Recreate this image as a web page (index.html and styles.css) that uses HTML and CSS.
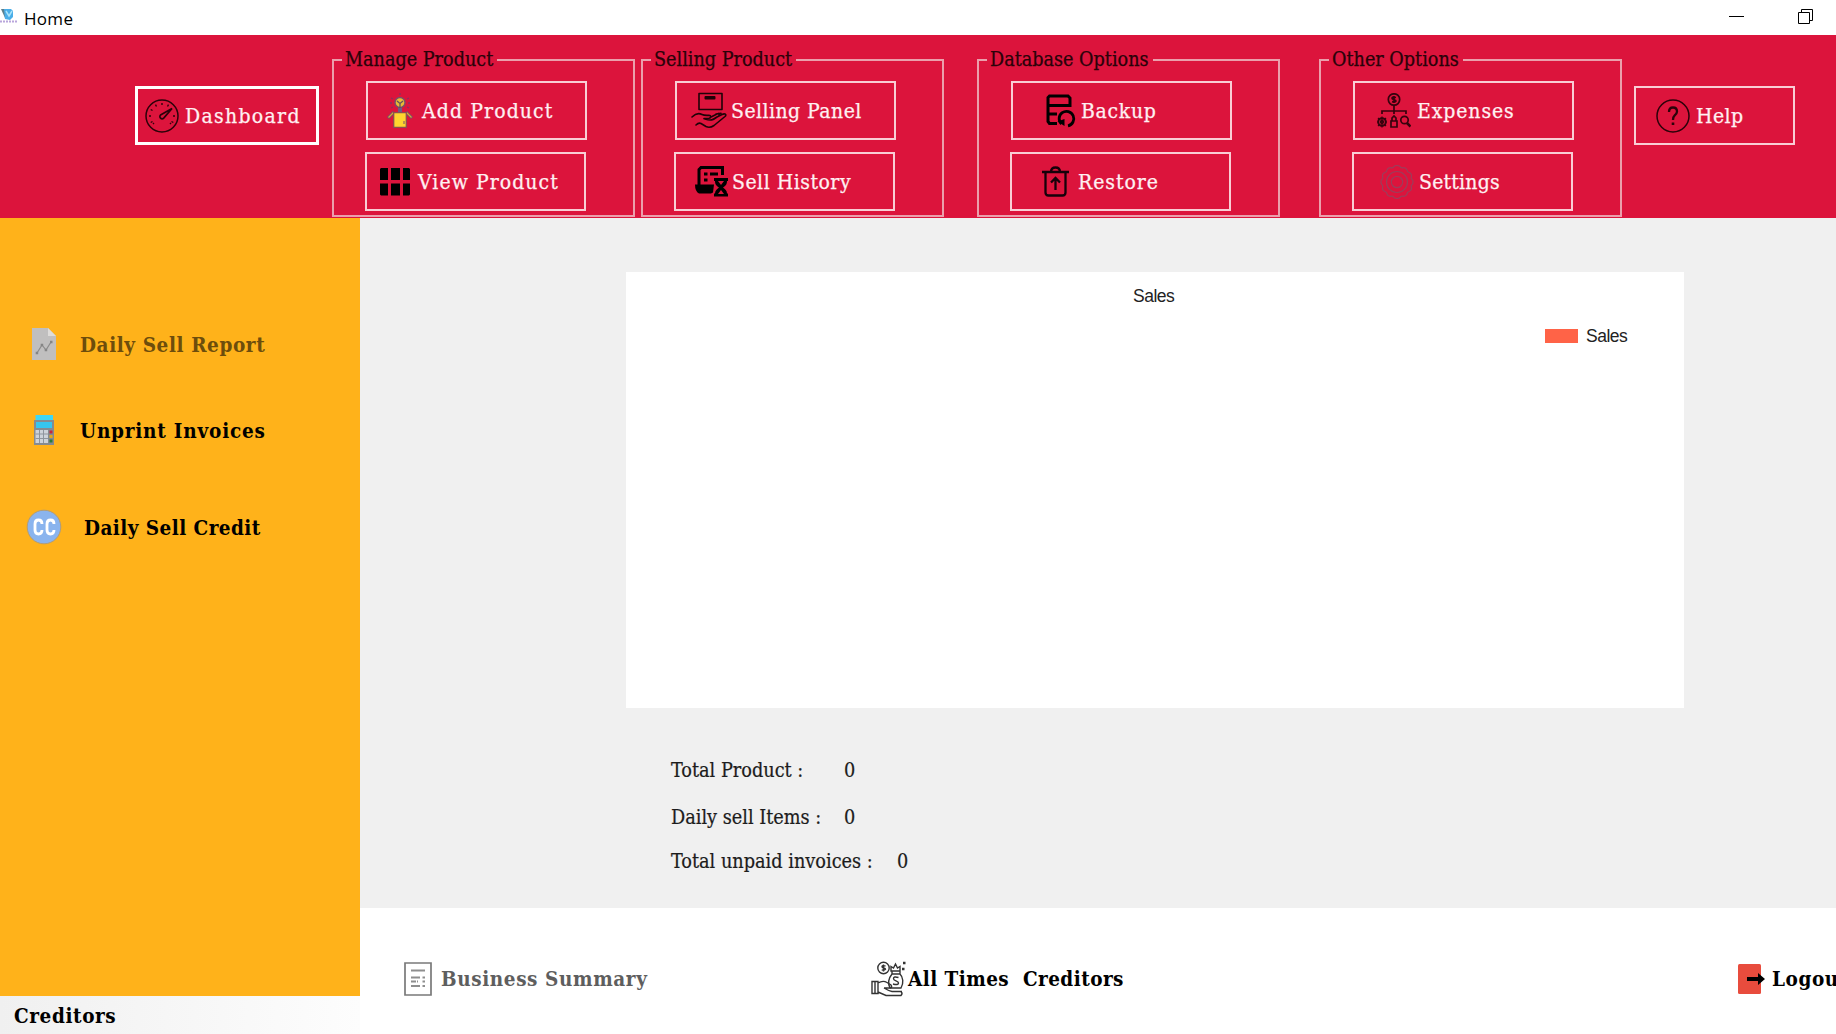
FILE: index.html
```html
<!DOCTYPE html>
<html lang="en">
<head>
<meta charset="utf-8">
<title>Home</title>
<link rel="stylesheet" href="styles.css">
</head>
<body>
<header class="titlebar">
  <svg class="app-icon" width="18" height="16" viewBox="0 0 18 16"><path d="M1 1l4 9 3-1-2-8z" fill="#5b7f8c"/><path d="M4 1h7l2 2v6l-3 3-5-1z" fill="#4aaee8"/><path d="M6 3l3 5 3-5" fill="none" stroke="#a9e4fa" stroke-width="1.5"/><path d="M0 13.500h17" stroke="#b9a6dc" stroke-width="2" stroke-dasharray="2 1"/></svg>
  <span class="window-title">Home</span>
  <svg class="win-min" width="15" height="16" viewBox="0 0 15 16"><path d="M0 7.500h15" stroke="#000"/></svg>
  <svg class="win-restore" width="15" height="16" viewBox="0 0 15 16" fill="none" stroke="#000"><path d="M.5 3.500h11v11H.5z"/><path d="M3.500 3.500v-3h11v11h-3"/></svg>
</header>

<nav class="ribbon">
  <button class="btn btn-dashboard"><svg width="34" height="34" viewBox="0 0 34 34" fill="none" stroke="#2b0209"><circle cx="17" cy="17" r="16" stroke-width="1.500"/><path d="M15.500 16l11.500-6.500-8.300 9.600a2 2 0 1 1-3.200-3.100z" stroke-width="1.700"/><path d="M4 17h2M28 17h2M17 4v2M10.500 5.700l1 1.800M23.500 5.700l-1 1.800M5.700 10.500l1.800 1M5.700 23.500l1.800-1M28.300 23.500l-1.800-1M8 25l1-1M26 25l-1-1" stroke-width="1.400"/></svg><span>Dashboard</span></button>

  <fieldset class="group group-product">
    <legend>Manage Product</legend>
    <button class="btn btn-add"><svg width="28" height="36" viewBox="0 0 28 36"><path d="M14 0v2M5 5l2 1M23 5l-2 1M4 10h2M22 10h2M5 15l2-1M23 15l-2-1" stroke="#8d2f5d" stroke-width="1.300"/><circle cx="14" cy="9.500" r="5" fill="#e9bb35" stroke="#75506a" stroke-width="1.400"/><path d="M11 8l3 2.500L17 8M14 10v5" fill="none" stroke="#635060" stroke-width="1.300"/><path d="M12 15h4v4h-4z" fill="#6c5b83"/><path d="M2 25l6-6M26 25l-6-6" stroke="#75506a" stroke-width="3"/><path d="M2.500 24.500l5-5M25.500 24.500l-5-5" stroke="#dba630" stroke-width="1.200"/><path d="M7.700 19.700h12.600v14.600H7.700z" fill="#ffd52f" stroke="#8c4f4f" stroke-width="1.300"/><path d="M18 28v3" stroke="#75506a"/></svg><span>Add Product</span></button>
    <button class="btn btn-view"><svg width="30" height="28" viewBox="0 0 30 28"><path d="M1 0h7v12H0V1zM11 0h9v12h-9zM23 0h6l1 1v11h-7zM0 15.500h8v12H1l-1-1zM11 15.500h9v12h-9zM23 15.500h7v11l-1 1h-6z"/></svg><span>View Product</span></button>
  </fieldset>

  <fieldset class="group group-selling">
    <legend>Selling Product</legend>
    <button class="btn btn-panel"><svg width="36" height="37" viewBox="0 0 36 37" fill="none" stroke="#1e0207" stroke-width="1.600" stroke-linejoin="round" stroke-linecap="round"><path d="M8 1.500h23v16H8z"/><path d="M14.500 5h9v1.500h-9z" stroke-width="2"/><path d="M1 25c4-4 7-4 10-2.500 2 1 4 1 7 .8 2 0 2.500 2.700 0 3l-5 .3M14 27c6 2 8 1 12-2l5-2.500c3-1.500 5 0 3 2L23 33.500c-3 2-5 2.500-8 1l-5-3c-2-1-3-.5-5 1.500M20 25l6-3c2-1 3 0 2 1M25 22l5-.7"/></svg><span>Selling Panel</span></button>
    <button class="btn btn-history"><svg width="34" height="31" viewBox="0 0 34 31"><path d="M4 19V3.500L6 1.500h21.500V9" fill="none" stroke="#000" stroke-width="3"/><path d="M9 6.500h3.500v3H9zM15 6.500h8v3h-8zM9 12.500h3.500v3H9zM0 18.500h19l-1 8-2 1H4q-4-2-4-9z"/><path d="M20 12h13v3h-1c0 4-2 5-4 6.500 2 1.500 4 3 4 6h1v3H19v-3h1c0-3 2-4.500 4-6-2-1.500-4-2.500-4-6.500h-1v-3zM23 15l3 4 3-4zM23 28h6l-3-4z" fill-rule="evenodd"/></svg><span>Sell History</span></button>
  </fieldset>

  <fieldset class="group group-database">
    <legend>Database Options</legend>
    <button class="btn btn-backup"><svg width="31" height="34" viewBox="0 0 31 34" fill="none" stroke="#000" stroke-width="3"><path d="M11 29.500H3.500l-1.500-2V3.500L3.500 2H22l2 2v7.500H2M2 20h9"/><path d="M15.500 30A7.300 7.300 0 1 1 22 31.800" stroke-width="2.800"/><path d="M11.500 27.500l7 4.500v-7z" fill="#000" stroke="none"/></svg><span>Backup</span></button>
    <button class="btn btn-restore"><svg width="27" height="31" viewBox="0 0 27 31" fill="none" stroke="#16010a" stroke-width="2.300"><path d="M0 6h27M3.500 6v20.500q0 3 3 3h14q3 0 3-3V6M9 6q0-4.500 4.500-4.500T18 6M13.500 24V12M9 16.500l4.500-4.500 4.500 4.500"/></svg><span>Restore</span></button>
  </fieldset>

  <fieldset class="group group-other">
    <legend>Other Options</legend>
    <button class="btn btn-expenses"><svg width="34" height="35" viewBox="0 0 34 35" fill="none" stroke="#35030d" stroke-width="1.700"><circle cx="17" cy="6.500" r="5.700"/><path d="M19 4.500q-4-1-4 .8c0 1.700 4 .8 4 2.700q-.5 1.500-4 .7M17 3v7M17 12v9M5 21v-3h24v3"/><circle cx="5" cy="29" r="3.800" stroke-width="2"/><circle cx="5" cy="29" r="1.300"/><path d="M5 23.500v11M0 29h2M8 29h2M1 25l1.500 1.500M9 25l-1.500 1.500M1 33l1.500-1.500M9 33l-1.500-1.500" stroke-width="1.200"/><path d="M14 28h6v6h-6zM15 28v-3l2-2 2 2v3"/><circle cx="27.500" cy="27" r="3.700"/><path d="M30 30l3.500 3.500" stroke-width="2.500"/></svg><span>Expenses</span></button>
    <button class="btn btn-settings"><svg width="34" height="34" viewBox="0 0 34 34" fill="none" stroke="#9d3d5a" stroke-width="1.200"><circle cx="17" cy="17" r="10.500"/><circle cx="17" cy="17" r="5.700"/><path d="M14 1.500q3-2 6 0 1 2 3 1.300 3-.5 4 2.200 0 2 2 2.500 3 1 2.500 4-1 2 .8 3 1.500 2.500 0 5-1.800 1-.8 3 .5 3-2.500 4-2 .5-2 2.500-1 2.700-4 2.200-2-.7-3 1.300-3 2-6 0-1-2-3-1.300-3 .5-4-2.200 0-2-2-2.500-3-1-2.500-4 1-2-.8-3-1.500-2.500 0-5 1.800-1 .8-3-.5-3 2.500-4 2-.5 2-2.500 1-2.700 4-2.200 2 .7 3-1.300z"/></svg><span>Settings</span></button>
  </fieldset>

  <button class="btn btn-help"><svg width="34" height="34" viewBox="0 0 34 34" fill="none" stroke="#2b0209"><circle cx="17" cy="17" r="16" stroke-width="1.500"/><path d="M13 13q0-4.500 4-4.500t4 4q0 2-2.300 3.800-1.700 1.500-1.700 4.700" stroke-width="2.300"/><path d="M15.700 23.500h2.600v2.500h-2.600z" fill="#2b0209" stroke="none"/></svg><span>Help</span></button>
</nav>

<div class="workspace">
  <aside class="sidebar">
    <ul class="menu">
      <li class="menu-report"><svg width="36" height="36" viewBox="0 0 36 36"><path d="M6 2h16l8 8v24H6z" fill="#c0bfbf"/><path d="M22 2l8 8h-8z" fill="#dedcda"/><path d="M11 27l5-8 4 5 5-8" fill="none" stroke="#8b8b8b" stroke-width="1.200"/><path d="M9.700 25.700h2.500v2.500H9.700zM14.700 17.700h2.500v2.500h-2.500zM18.700 22.700h2.500v2.500h-2.500zM24 14.700h2.500v2.500H24z" fill="#858585"/></svg><span>Daily Sell Report</span></li>
      <li class="menu-unprint"><svg width="36" height="36" viewBox="0 0 36 36"><path d="M9.500 3H27v6H9.500z" fill="#3fd6f4"/><path d="M8 8h20v25H8z" fill="#858b91"/><path d="M10 10h16v6H10z" fill="#36c6ef"/><path d="M9.500 18H22v13H9.500z" fill="#cdd3da"/><path d="M13.500 18v13M17.500 18v13M9.500 22H22M9.500 26.500H22" stroke="#8e959d"/><path d="M23.500 18.500h3v3h-3z" fill="#c6263e"/><path d="M23.500 23h3v3h-3z" fill="#e3a91c"/><path d="M23.500 27.500h3v3h-3z" fill="#2a7a3c"/></svg><span>Unprint Invoices</span></li>
      <li class="menu-credit"><svg width="36" height="36" viewBox="0 0 36 36"><circle cx="18" cy="18" r="16.800" fill="#8ab4ee" stroke="#b19c78"/><path d="M16 15q0-4-3.500-4T9 15v6q0 4 3.500 4t3.500-4M28 15q0-4-3.500-4T21 15v6q0 4 3.500 4t3.500-4" fill="none" stroke="#fff" stroke-width="2.800"/></svg><span>Daily Sell Credit</span></li>
    </ul>
    <div class="creditors">Creditors</div>
  </aside>

  <div class="content">
    <main class="main">
      <section class="chart">
        <h1>Sales</h1>
        <div class="legend"><i class="swatch"></i><span>Sales</span></div>
      </section>
      <dl class="stats">
        <div class="stat"><dt>Total Product :</dt><dd>0</dd></div>
        <div class="stat"><dt>Daily sell Items :</dt><dd>0</dd></div>
        <div class="stat stat-unpaid"><dt>Total unpaid invoices :</dt><dd>0</dd></div>
      </dl>
    </main>
    <footer class="actions">
      <a class="action-summary"><svg width="28" height="34" viewBox="0 0 28 34" fill="none" stroke="#8e8e8e"><path d="M1 1h26v32H1z" stroke="#797979" stroke-width="1.700"/><path d="M7 8.500h14M7 15.500h9M18.500 15.500H21M7 19.500h5M18.500 19.500H21M13 19.500h1M7 24h9M18.500 24H21" stroke-width="2"/></svg><span>Business Summary</span></a>
      <a class="action-creditors"><svg width="35" height="36" viewBox="0 0 35 36" fill="none" stroke="#333" stroke-width="1.400"><circle cx="12.500" cy="7" r="5.700"/><path d="M14.500 5q-3.500-1-3.500.7c0 1.700 3.500.8 3.500 2.500q-1 1.500-3.800.7M12.500 3.500v7"/><path d="M20 5.500l2.500 1.500L24.500 3l2 4 2.500-1.500V10h-9zM21 10v3h8v-3M21 13c-4 5-4 10-2 14h11c3-5 2-11-1-14"/><path d="M27.500 16.500q-5-1.500-5 1.200c0 2.600 5 1.600 5 4.300q0 2.500-5.500 1M1 20.500h6v12H1zM4 20.500v12M7 22q5-3 9-.5l4 2.500q2 3-2 3h-5M7 31l8 3.500h15q2-2 0-4h-9M13 27q5 3 8 3.500h10"/><path d="M32 2h2.500M31 8h2.500" stroke-width="2.500"/></svg><span>All Times&nbsp; Creditors</span></a>
      <a class="action-logout"><svg width="27" height="30" viewBox="0 0 27 30"><rect width="23" height="30" rx="1.500" fill="#e84c3d"/><path d="M9 13h11V9l7 6-7 6v-4H9z"/></svg><span>Logout</span></a>
    </footer>
  </div>
</div>
</body>
</html>
```
FILE: styles.css
```css
* { box-sizing: border-box; }

body {
  margin: 0;
  width: 1836px;
  height: 1034px;
  overflow: hidden;
  display: flex;
  flex-direction: column;
  background: #fff;
  color: #000;
  font-family: "DejaVu Serif Condensed", "DejaVu Serif", serif;
}

svg { display: block; flex: none; }

/* Window title bar */
.titlebar { height: 35px; flex: none; display: flex; align-items: flex-start; }
.app-icon { margin: 8px 6px 0 0; }
.window-title { font: 17px/24px "Open Sans", "Noto Sans", sans-serif; letter-spacing: .3px; margin-top: 7px; }
.win-min { margin: 9px 0 0 auto; }
.win-restore { margin: 9px 23px 0 54px; }

/* Red ribbon */
.ribbon {
  height: 183px;
  flex: none;
  display: flex;
  align-items: flex-start;
  background: #dc143c;
}
.btn {
  display: flex;
  align-items: center;
  width: 221px;
  height: 59px;
  margin: 0;
  padding: 0;
  border: 2px solid #f9cdd5;
  background: none;
  color: #fff0f2;
  font: 21px/24px "DejaVu Serif Condensed", "DejaVu Serif", serif;
  -webkit-text-stroke: .25px #fff0f2;
  white-space: nowrap;
}
.btn span { padding-top: 1px; }
.btn-dashboard {
  width: 184px;
  margin: 51px 13px 0 135px;
  border: 3px solid #fff;
  padding-left: 7px;
  gap: 6px;
  letter-spacing: 1.3px;
}
.btn-help { width: 161px; margin: 51px 0 0 12px; padding-left: 20px; gap: 6px; letter-spacing: .4px; }
.btn-dashboard span, .btn-help span { padding-top: 0; }

.group {
  width: 303px;
  height: 169px;
  min-width: 0;
  margin: 13px 0 0;
  padding: 9px 0 0 31px;
  border: 2px solid #eb9fac;
}
.group legend {
  margin-left: -23px;
  padding: 0 4px 0 3px;
  font-size: 19.6px;
  line-height: 24px;
  color: #2a0209;
  -webkit-text-stroke: .25px #2a0209;
}
.group .btn + .btn { margin-top: 12px; }
.group .btn:first-of-type { margin-left: 1px; }
.group-selling { margin-left: 6px; }
.group-database { margin-left: 33px; }
.group-other { margin-left: 39px; }

.btn-add { padding-left: 18px; gap: 8px; letter-spacing: 1.1px; }
.btn-view { padding-left: 13px; gap: 8px; letter-spacing: 1.05px; }
.btn-panel { padding-left: 14px; gap: 4px; letter-spacing: .45px; }
.btn-history { padding-left: 19px; gap: 3px; letter-spacing: .5px; }
.btn-backup { padding-left: 33px; gap: 4px; letter-spacing: .7px; }
.btn-restore { padding-left: 30px; gap: 9px; letter-spacing: .95px; }
.btn-expenses { padding-left: 22px; gap: 6px; letter-spacing: .9px; }
.btn-settings { padding-left: 26px; gap: 5px; letter-spacing: .2px; }

/* Area below the ribbon */
.workspace { flex: 1; min-height: 0; display: flex; }

.sidebar {
  width: 360px;
  flex: none;
  display: flex;
  flex-direction: column;
  background: #ffb21a;
  font-size: 20.5px;
  font-weight: bold;
  line-height: 26px;
  letter-spacing: .6px;
}
.menu { flex: 1; margin: 0; padding: 108px 0 0 26px; list-style: none; }
.menu li { display: flex; align-items: center; height: 36px; gap: 18px; white-space: nowrap; }
.menu span { padding-top: 2px; }
.menu .menu-report { color: #6d4d0c; }
.menu .menu-unprint { margin-top: 50px; letter-spacing: .8px; }
.menu .menu-unprint span { padding-top: 1px; }
.menu .menu-credit { margin-top: 61px; gap: 22px; letter-spacing: .45px; }
.creditors {
  height: 38px;
  padding: 7px 14px;
  background: linear-gradient(90deg, #f0f0f0, #fdfdfd);
}

.content { flex: 1; min-width: 0; display: flex; flex-direction: column; }
.main { height: 690px; flex: none; padding: 54px 0 0 266px; background: #f0f0f0; }

.chart {
  width: 1058px;
  height: 436px;
  padding-top: 13px;
  background: #fff;
  font: 17.5px/22px "Liberation Sans", Arial, sans-serif;
  letter-spacing: -.5px;
  color: #222;
}
.chart h1 { margin: 0 0 0 507px; font: inherit; }
.legend { display: flex; align-items: center; gap: 8px; margin: 18px 0 0 919px; }
.swatch { width: 33px; height: 14px; background: #ff6347; }

.stats {
  margin: 0;
  padding: 51px 0 0 45px;
  font-size: 19.7px;
  line-height: 24px;
  color: #1c1c1c;
  -webkit-text-stroke: .2px #1c1c1c;
}
.stat { display: flex; margin-bottom: 23px; white-space: nowrap; }
.stat dt { width: 173px; }
.stat dd { margin: 0; }
.stat-unpaid { margin-top: -3px; }
.stat-unpaid dt { width: 226px; }

/* Footer links */
.actions {
  flex: 1;
  display: flex;
  overflow: hidden;
  padding-top: 53px;
  background: #fff;
  font-size: 20.5px;
  font-weight: bold;
  line-height: 26px;
  letter-spacing: .6px;
  white-space: nowrap;
}
.actions a { display: flex; align-items: center; height: 36px; flex: none; }
.action-summary { width: 467px; margin-left: 44px; gap: 9px; color: #5e5e5e; }
.action-creditors { width: 867px; gap: 2px; letter-spacing: .45px; }
.action-logout { gap: 7px; }
```
